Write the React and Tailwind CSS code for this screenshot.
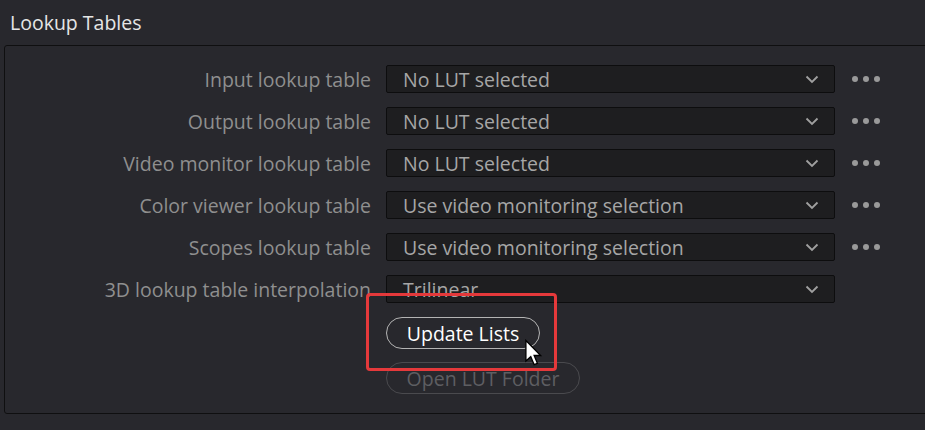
import React from 'react';

const rows = [
  { label: 'Input lookup table', value: 'No LUT selected', more: true },
  { label: 'Output lookup table', value: 'No LUT selected', more: true },
  { label: 'Video monitor lookup table', value: 'No LUT selected', more: true },
  { label: 'Color viewer lookup table', value: 'Use video monitoring selection', more: true },
  { label: 'Scopes lookup table', value: 'Use video monitoring selection', more: true },
  { label: '3D lookup table interpolation', value: 'Trilinear', more: false },
];

function Chevron() {
  return (
    <svg width="14" height="9" viewBox="0 0 14 9" className="shrink-0">
      <path d="M1.5 1.5 L7 7 L12.5 1.5" fill="none" stroke="#a0a0a0" strokeWidth="1.8" />
    </svg>
  );
}

function Dots() {
  return (
    <div className="flex items-center gap-[5px]">
      <span className="w-[6px] h-[6px] rounded-full bg-[#9a9a9a]"></span>
      <span className="w-[6px] h-[6px] rounded-full bg-[#9a9a9a]"></span>
      <span className="w-[6px] h-[6px] rounded-full bg-[#9a9a9a]"></span>
    </div>
  );
}

export default function App() {
  return (
    <div
      className="w-[925px] h-[430px] bg-[#28282d] overflow-hidden relative"
      style={{ fontFamily: '"Open Sans", "Liberation Sans", sans-serif' }}
    >
      <div className="h-[45px] pl-[10px] pt-[9px] text-[19.5px] leading-[28px] text-[#e6e6e6]">
        Lookup Tables
      </div>

      {/* panel */}
      <div className="ml-[4px] w-[940px] h-[369px] border border-[#0f0f10] rounded-[3px] pt-[19px]">
        <div className="flex flex-col gap-[14px]">
          {rows.map((r) => (
            <div key={r.label} className="flex items-center h-[28px]">
              <div className="w-[366px] pt-[2px] text-right text-[19.5px] text-[#8f8f8f] leading-[26px] whitespace-nowrap">
                {r.label}
              </div>
              <div className="ml-[15px] w-[449px] h-[28px] bg-[#1e1e20] border border-[#0d0d0e] rounded-[2px] flex items-center pl-[16px] pr-[15px]">
                <span className="flex-1 pt-[2px] text-[19.5px] text-[#a6a6a6] leading-[24px] whitespace-nowrap">{r.value}</span>
                <Chevron />
              </div>
              {r.more && (
                <div className="ml-[17px]">
                  <Dots />
                </div>
              )}
            </div>
          ))}
        </div>

        <div className="pl-[381px] mt-[14px] flex flex-col items-start gap-[13px]">
          <button className="h-[32px] w-[154px] rounded-full border border-[#b4b4b4] pt-[1px] text-[19.5px] text-white leading-[28px]">
            Update Lists
          </button>
          <button className="h-[32px] w-[194px] rounded-full border border-[#4a4a4e] pt-[1px] text-[19.5px] text-[#5e5e62] leading-[28px]">
            Open LUT Folder
          </button>
        </div>
      </div>

      {/* red highlight */}
      <div className="absolute left-[366px] top-[293px] w-[191px] h-[78px] border-[3px] border-[#e5393b] rounded-[4px]"></div>

      {/* cursor */}
      <svg className="absolute left-[524px] top-[339px]" width="20" height="28" viewBox="0 0 13 19">
        <path d="M1 1 L1 15 L4.3 12 L6.6 17.4 L8.8 16.5 L6.6 11.2 L11 11.2 Z" fill="#ffffff" stroke="#000000" strokeWidth="0.9" strokeLinejoin="miter" />
      </svg>
    </div>
  );
}
